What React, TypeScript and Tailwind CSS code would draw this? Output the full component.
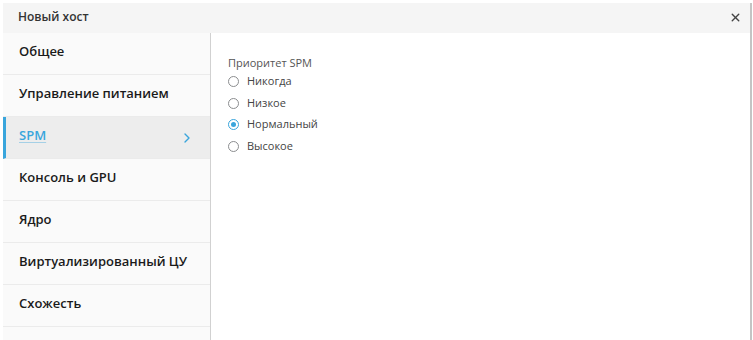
import { ChevronRight, X } from 'lucide-react';
import { useState } from 'react';

const sections = [
    'Общее',
    'Управление питанием',
    'SPM',
    'Консоль и GPU',
    'Ядро',
    'Виртуализированный ЦУ',
    'Схожесть',
    '',
];

const priorities = ['Никогда', 'Низкое', 'Нормальный', 'Высокое'];

export default function App() {
    const [active, setActive] = useState('SPM');
    const [priority, setPriority] = useState('Нормальный');

    return (
        <div className="h-[340px] w-[753px] overflow-hidden bg-white pl-[3px] pt-[3px] font-['Open_Sans',sans-serif]">
            <div className="flex h-full w-[749px] flex-col border-r-2 border-[#c4c4c4]">
                <div className="flex h-[30px] shrink-0 items-center justify-between bg-[#f5f5f5] pb-[2px] pl-[15px] pr-[8px]">
                    <span className="text-[12px] font-semibold text-[#333]">
                        Новый хост
                    </span>
                    <X className="size-[13px] text-[#444]" strokeWidth={2.6} />
                </div>

                <div className="flex min-h-0 flex-1">
                    <nav className="flex w-[208px] shrink-0 flex-col border-r border-[#d1d1d1] bg-[#fafafa]">
                        {sections.map((s, i) => {
                            const selected = s === active;
                            return (
                                <button
                                    key={i}
                                    onClick={() => s && setActive(s)}
                                    className={
                                        selected
                                            ? 'flex h-[42px] shrink-0 items-center justify-between border-b border-l-[3px] border-b-[#ebebeb] border-l-[#39a5dc] bg-[#ededed] pb-[4px] pl-[13px] pr-[15px] text-left'
                                            : 'flex h-[42px] shrink-0 items-center justify-between border-b border-[#ebebeb] pb-[4px] pl-[16px] pr-[15px] text-left'
                                    }
                                >
                                    <span
                                        className={
                                            selected
                                                ? 'text-[13px] font-semibold text-[#39a5dc] underline decoration-[#39a5dc]/40 underline-offset-2'
                                                : 'text-[13px] font-semibold text-[#1a1a1a]'
                                        }
                                    >
                                        {s}
                                    </span>
                                    {selected && (
                                        <ChevronRight
                                            className="mt-[4px] size-[16px] text-[#39a5dc]"
                                            strokeWidth={2}
                                        />
                                    )}
                                </button>
                            );
                        })}
                    </nav>

                    <div className="flex-1 pl-[17px] pt-[22px]">
                        <div className="text-[11px] text-[#555]">
                            Приоритет SPM
                        </div>
                        <div className="-mt-[1px] flex flex-col">
                            {priorities.map((p) => {
                                const checked = p === priority;
                                return (
                                    <label
                                        key={p}
                                        onClick={() => setPriority(p)}
                                        className="flex h-[21.7px] cursor-pointer items-center gap-[8px]"
                                    >
                                        {checked ? (
                                            <span className="flex size-[11px] items-center justify-center rounded-full border border-[#39a5dc] bg-white">
                                                <span className="size-[5px] rounded-full bg-[#39a5dc]" />
                                            </span>
                                        ) : (
                                            <span className="size-[11px] rounded-full border-[1.5px] border-[#8b8d8f] bg-white" />
                                        )}
                                        <span className="text-[11px] text-[#444]">
                                            {p}
                                        </span>
                                    </label>
                                );
                            })}
                        </div>
                    </div>
                </div>
            </div>
        </div>
    );
}
